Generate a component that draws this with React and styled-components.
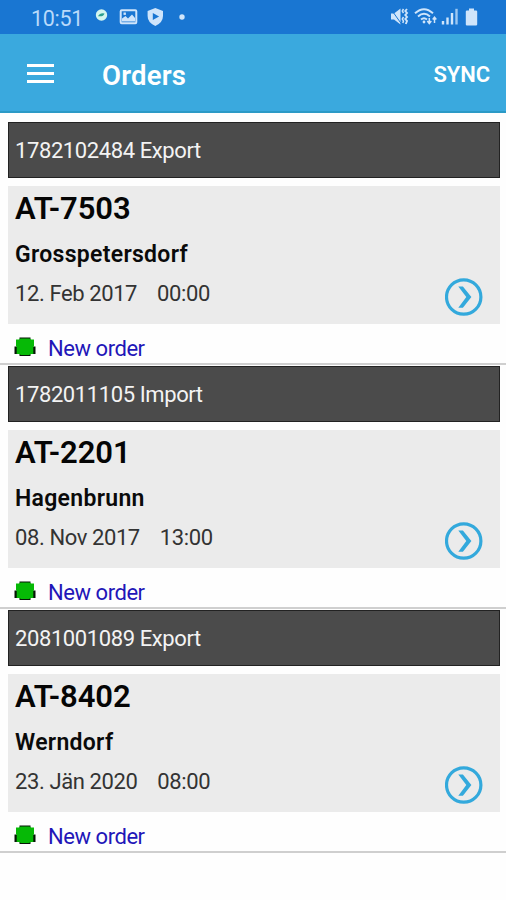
import React from "react"
import styled, { createGlobalStyle } from "styled-components"

const orders = [
    { id: 1, number: "1782102484 Export", plate: "AT-7503", city: "Grosspetersdorf", date: "12. Feb 2017", time: "00:00" },
    { id: 2, number: "1782011105 Import", plate: "AT-2201", city: "Hagenbrunn", date: "08. Nov 2017", time: "13:00" },
    { id: 3, number: "2081001089 Export", plate: "AT-8402", city: "Werndorf", date: "23. Jän 2020", time: "08:00" },
]

const NotificationIcons = () => (
    <svg width="92" height="20" viewBox="0 0 92 20">
        <circle cx="6.500" cy="8" r="5.700" fill="#d3f5ee" />
        <path d="M3 9.200 Q4.800 5.600 9.500 6.400 Q8.500 10 3 9.200Z" fill="#2ba08f" />
        <rect x="25.700" y="3.300" width="15.600" height="13" rx="1" fill="none" stroke="#cfe5fb" strokeWidth="2" />
        <path d="M27 14.500 V11.500 L30.500 9 L33 11.500 L37 7.500 L40 11 V14.500Z" fill="#cfe5fb" />
        <rect x="28.500" y="5.500" width="2.400" height="2.400" fill="#cfe5fb" />
        <path d="M60.300 1 L68 4 V9 Q68 15.500 60.300 19 Q52.600 15.500 52.600 9 V4Z" fill="#cfe5fb" />
        <path d="M57.800 6 L64.100 9.500 L57.800 13Z" fill="#1976d2" />
        <circle cx="87" cy="10" r="2.700" fill="#cfe5fb" />
    </svg>
)

const SystemIcons = () => (
    <svg width="88" height="20" viewBox="0 0 88 20" fill="none" stroke="#cfe5fb">
        <path d="M0 6.500 H3 L9.500 1.500 V17.500 L3 12.500 H0Z" fill="#cfe5fb" stroke="none" />
        <path d="M-0.500 1.500 L10.500 17" stroke="#1976d2" strokeWidth="1" />
        <path d="M12.500 2 L11.300 4 L12.500 6 M12.500 10 L11.300 12 L12.500 14 L11.800 16" strokeWidth="1.500" />
        <path d="M16 2 L14.300 4 L16 6 L14.300 8 L16 10 L14.300 12 L16 14 L14.800 17" strokeWidth="1.900" />
        <path d="M24 6.300 Q33 -2 42 6.300" strokeWidth="1.900" />
        <path d="M27 9.500 Q33 4 39 9.500" strokeWidth="1.900" />
        <path d="M30 12.500 Q33 9.800 36 12.500" strokeWidth="1.900" />
        <circle cx="33" cy="15" r="1.400" fill="#cfe5fb" stroke="none" />
        <path d="M38.300 11 V16 M36.300 14 L38.300 16.500 L40.300 14" strokeWidth="1.500" />
        <path d="M43.500 16 V10.500 M41.700 12.500 L43.500 10.200 L45.300 12.500" strokeWidth="1.500" />
        <path d="M52 14 V17.500 M56.500 10.500 V17.500 M61 6 V17.500" strokeWidth="2.400" />
        <path d="M65.500 1.800 V17.500" stroke="#9cc8f2" strokeWidth="2.400" />
        <path d="M78 1.500 H83 V3.500 H85 Q86.200 3.500 86.200 4.500 V17.500 Q86.200 18.500 85 18.500 H76 Q74.800 18.500 74.800 17.500 V4.500 Q74.800 3.500 76 3.500 H78Z" fill="#cfe5fb" stroke="none" />
    </svg>
)

const ArrowIcon = () => (
    <svg width="38" height="38" viewBox="0 0 38 38" fill="none" stroke="#33a9dc">
        <circle cx="18.700" cy="19" r="17.200" strokeWidth="3.200" />
        <path d="M13.300 8.500 H17.900 L26.400 19 L17.900 29.800 H13.300 L21.300 19Z" fill="#33a9dc" stroke="none" />
    </svg>
)

const StatusIcon = () => (
    <svg width="22" height="20" viewBox="0 0 22 20">
        <path d="M5.500 0.500 H16.500 V3 H5.500Z M0.500 9.500 H3 V17 H0.500Z M19 9.500 H21.500 V17 H19Z M5.500 16.500 H16.500 V19 H5.500Z" fill="#071507" />
        <path d="M2 2.500 H5 L6.500 1.600 H15.500 L17 2.500 H20 V9 L19.300 10 V17 H17 L15 18 H7 L5 17 H2.700 V10 L2 9Z" fill="#06b906" />
    </svg>
)

const App = () => {
    return (
        <Main>
            <GlobalStyle />
            <StatusBar>
                <Clock>10:51</Clock>
                <NotificationIcons />
                <System>
                    <SystemIcons />
                </System>
            </StatusBar>

            <AppBar>
                <Menu aria-label="Menu">
                    <span />
                    <span />
                    <span />
                </Menu>
                <Title>Orders</Title>
                <Sync>SYNC</Sync>
            </AppBar>

            <List>
                {orders.map((order) => (
                    <Order key={order.id}>
                        <OrderHead>{order.number}</OrderHead>
                        <Card>
                            <div>
                                <Plate>{order.plate}</Plate>
                                <City>{order.city}</City>
                                <When>
                                    <span>{order.date}</span>
                                    <span>{order.time}</span>
                                </When>
                            </div>
                            <Open aria-label="Open order">
                                <ArrowIcon />
                            </Open>
                        </Card>
                        <State>
                            <StatusIcon />
                            <span>New order</span>
                        </State>
                    </Order>
                ))}
            </List>
        </Main>
    )
}

export default App

const GlobalStyle = createGlobalStyle`
    * {
        box-sizing: border-box;
    }

    body {
        margin: 0;
        background-color: #fefefe;
        font-family: Roboto, sans-serif;
    }

    button {
        padding: 0;
        border: none;
        background: none;
        font-family: inherit;
    }
`

const Main = styled.div`
    min-height: 900px;
    background-color: #fefefe;
`

const StatusBar = styled.div`
    height: 34px;
    padding: 0 27px 0 31px;
    display: flex;
    align-items: center;
    background-color: #1976d2;

    svg {
        display: block;
    }
`

const Clock = styled.span`
    width: 64px;
    padding-top: 3px;
    font-size: 21.5px;
    line-height: 30px;
    letter-spacing: -0.3px;
    color: #b9dafa;
`

const System = styled.div`
    margin-left: auto;
`

const AppBar = styled.header`
    height: 79px;
    padding: 0 16px 0 27px;
    display: flex;
    align-items: center;
    background-color: #3aa9de;
    border-bottom: 2px solid #2b9ac6;
`

const Menu = styled.button`
    width: 27px;
    margin-top: 1px;
    display: flex;
    flex-direction: column;
    gap: 5px;

    span {
        height: 3px;
        background-color: white;
    }
`

const Title = styled.h1`
    margin: 5px 0 0 48px;
    font-size: 27.5px;
    font-weight: 600;
    letter-spacing: 0.2px;
    color: white;
`

const Sync = styled.button`
    margin: 3px 0 0 auto;
    font-size: 22px;
    font-weight: 600;
    letter-spacing: -0.1px;
    color: white;
`

const List = styled.div`
    padding-top: 8px;
`

const Order = styled.div`
    height: 244px;
    padding-top: 1px;
    border-bottom: 2px solid #cfcfcf;
`

const OrderHead = styled.div`
    height: 56px;
    margin: 0 6px 0 8px;
    padding: 0 0 0 6px;
    display: flex;
    align-items: center;
    background-color: #4b4b4b;
    border: 1px solid #222;
    font-size: 22px;
    letter-spacing: -0.4px;
    color: #f3f3f3;
`

const Card = styled.div`
    height: 138px;
    margin: 8px 6px 0 8px;
    padding: 0 17px 0 7px;
    display: flex;
    justify-content: space-between;
    background-color: #ebebeb;
`

const Plate = styled.div`
    padding-top: 3px;
    font-size: 31px;
    font-weight: 600;
    line-height: 40px;
    letter-spacing: -0.1px;
    color: #050505;
`

const City = styled.div`
    padding-top: 9px;
    font-size: 23px;
    font-weight: 600;
    line-height: 34px;
    letter-spacing: 0.3px;
    color: #0a0a0a;
`

const When = styled.div`
    padding-top: 5px;
    display: flex;
    gap: 20px;
    font-size: 22px;
    line-height: 34px;
    letter-spacing: -0.4px;
    color: #333;
`

const Open = styled.button`
    margin-top: 92px;
    align-self: flex-start;

    svg {
        display: block;
    }
`

const State = styled.div`
    height: 39px;
    padding: 9px 0 0 14px;
    display: flex;
    align-items: center;
    gap: 12px;
    font-size: 22px;
    letter-spacing: -0.45px;
    color: #2216b8;

    svg {
        margin-top: -2px;
    }
`
